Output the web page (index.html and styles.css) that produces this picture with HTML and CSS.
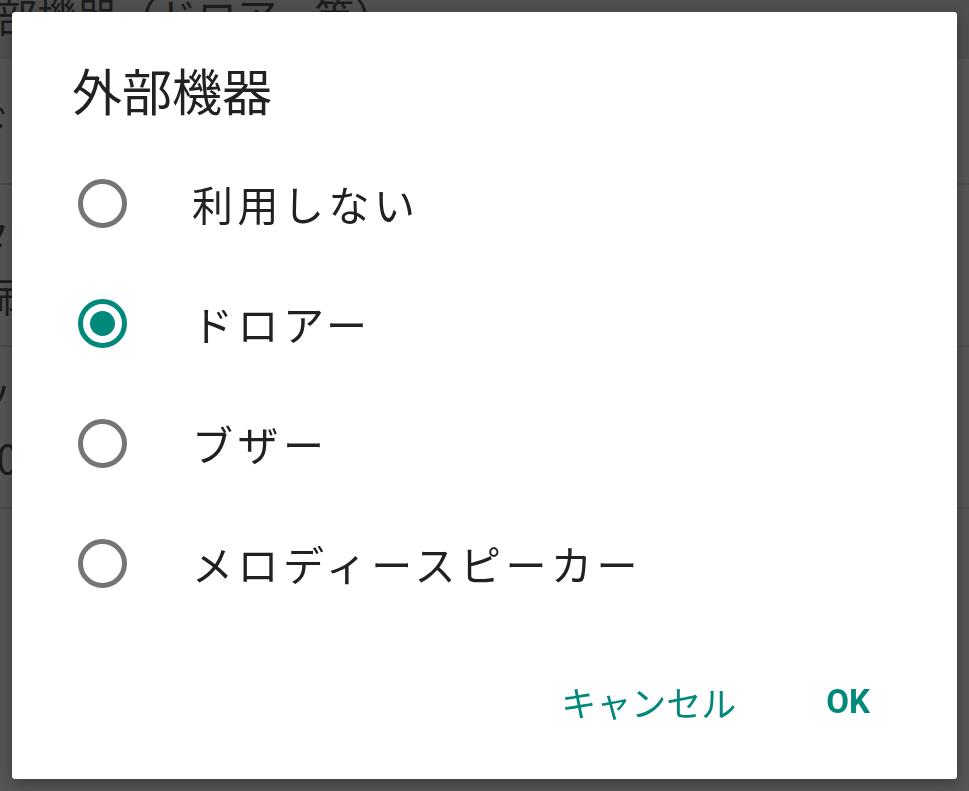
FILE: index.html
```html
<!DOCTYPE html>
<html lang="ja">
<head>
    <meta charset="UTF-8">
    <meta name="viewport" content="width=device-width, initial-scale=1.0">
    <title>外部機器</title>
    <link rel="stylesheet" href="styles.css">
</head>
<body>
    <div class="settings">
        <div class="settings-head">外部機器（ドロアー等）</div>
        <div class="settings-row row-one">
            <span class="row-title">ドロアー</span>
        </div>
        <div class="settings-row row-two">
            <span class="row-title">タイムアウト</span>
            <span class="row-sub">印刷後に開く</span>
        </div>
        <div class="settings-row row-two">
            <span class="row-title">ツール</span>
            <span class="row-sub">2000</span>
        </div>
        <div class="settings-row row-last"></div>
    </div>

    <div class="scrim">
        <div class="dialog">
            <h1 class="dialog-title">外部機器</h1>
            <div class="options">
                <label class="option">
                    <span class="radio"></span>
                    <span class="option-text">利用しない</span>
                </label>
                <label class="option">
                    <span class="radio checked"></span>
                    <span class="option-text">ドロアー</span>
                </label>
                <label class="option">
                    <span class="radio"></span>
                    <span class="option-text">ブザー</span>
                </label>
                <label class="option">
                    <span class="radio"></span>
                    <span class="option-text">メロディースピーカー</span>
                </label>
            </div>
            <div class="actions">
                <button class="action">キャンセル</button>
                <button class="action action-ok">OK</button>
            </div>
        </div>
    </div>
</body>
</html>
```

FILE: styles.css
```css
body {
    margin: 0;
    padding: 0;
    font-family: "Noto Sans CJK JP", "Noto Sans", sans-serif;
    background-color: #555555;
    overflow: hidden;
}

/* dimmed settings list behind the dialog */
.settings {
    color: #1c1c1c;
}

.settings-head {
    height: 57px;
    background-color: #4f4f4f;
    font-size: 40px;
    line-height: 30px;
    margin-left: -43px;
    white-space: nowrap;
    overflow: hidden;
}

.settings-row {
    border-top: 2px solid #4c4c4c;
    display: flex;
    flex-direction: column;
    justify-content: center;
    font-size: 40px;
    line-height: 60px;
    margin-left: -30px;
    white-space: nowrap;
    overflow: hidden;
}

.row-one {
    height: 124px;
}

.row-two {
    height: 160px;
}

.row-last {
    height: 300px;
}

.row-sub {
    margin-left: -18px;
}

/* dialog */
.scrim {
    position: fixed;
    inset: 0;
    padding: 12px;
    display: flex;
}

.dialog {
    flex: 1;
    background-color: #fff;
    border-radius: 3px;
    box-shadow: 0 4px 14px rgba(0, 0, 0, 0.3);
    padding-top: 45px;
    display: flex;
    flex-direction: column;
}

.dialog-title {
    margin: 0;
    padding-left: 60px;
    font-size: 50px;
    font-weight: normal;
    line-height: 64px;
    color: #212121;
}

.options {
    margin-top: 22px;
    display: flex;
    flex-direction: column;
}

.option {
    height: 120px;
    display: flex;
    align-items: center;
    padding-left: 66px;
}

.radio {
    width: 39px;
    height: 39px;
    border: 5px solid #757575;
    border-radius: 50%;
    display: flex;
    align-items: center;
    justify-content: center;
}

.radio.checked {
    border-color: #00897b;
}

.radio.checked::after {
    content: "";
    width: 25px;
    height: 25px;
    border-radius: 50%;
    background-color: #00897b;
}

.option-text {
    margin-left: 65px;
    font-size: 41px;
    letter-spacing: 4.5px;
    color: #212121;
}

.actions {
    margin-top: 50px;
    height: 56px;
    display: flex;
    justify-content: flex-end;
    align-items: center;
    gap: 90px;
    padding-right: 87px;
}

.action {
    border: none;
    background: none;
    padding: 0;
    font-family: "Noto Sans CJK JP", sans-serif;
    font-size: 35px;
    color: #00897b;
    cursor: pointer;
}

.action-ok {
    font-family: Roboto, "Noto Sans", sans-serif;
    font-weight: bold;
    font-size: 33px;
}
```
